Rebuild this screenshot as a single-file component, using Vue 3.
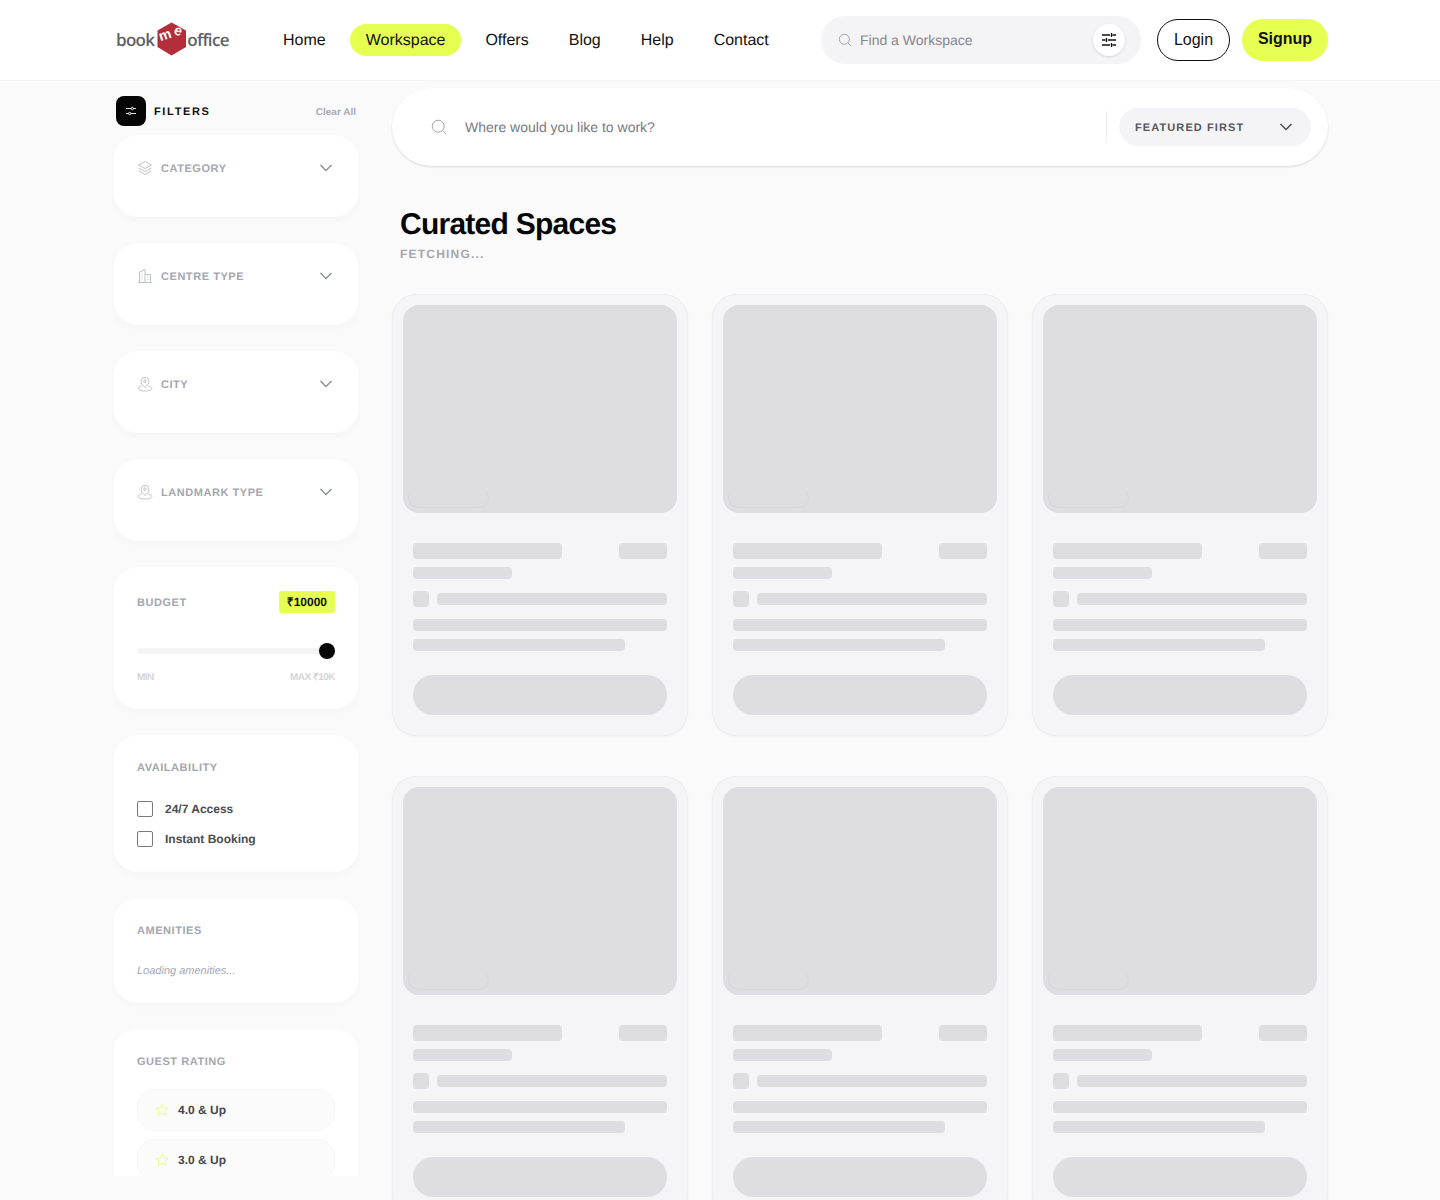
<script setup>
const navLinks = ['Home', 'Workspace', 'Offers', 'Blog', 'Help', 'Contact']
const dropdowns = [
  { label: 'Category', icon: 'layers' },
  { label: 'Centre Type', icon: 'building' },
  { label: 'City', icon: 'pin' },
  { label: 'Landmark Type', icon: 'pin' },
]
const availability = ['24/7 Access', 'Instant Booking']
const ratings = ['4.0 & Up', '3.0 & Up']
const skeletons = [1, 2, 3, 4, 5, 6]
</script>

<template>
  <div class="page">
    <header class="topbar">
      <div class="topbar-inner">
        <a class="logo">
          <span class="logo-word">book</span>
          <svg class="logo-mark" width="30" height="34" viewBox="0 0 30 34">
            <path d="M14.5 0.5 L29 8.5 V25 L14.5 33.5 L0.5 25 V8.5 Z" fill="#b32d3a" />
            <text x="2" y="18" class="logo-m" transform="rotate(-18 7 14)">m</text>
            <text x="17" y="13" class="logo-e" transform="rotate(16 20 10)">e</text>
          </svg>
          <span class="logo-word">office</span>
        </a>
        <nav class="nav">
          <a v-for="link in navLinks" :key="link" class="nav-link" :class="{ active: link === 'Workspace' }">{{ link }}</a>
        </nav>
        <div class="top-search">
          <svg width="14" height="14" viewBox="0 0 14 14" fill="none" stroke="#a3a5ad" stroke-width="1">
            <circle cx="6.3" cy="6.3" r="5" />
            <path d="M10 10 L13 13" />
          </svg>
          <span class="top-search-text">Find a Workspace</span>
          <button class="round-btn">
            <svg width="16" height="16" viewBox="0 0 16 16" fill="none" stroke="#111" stroke-width="1.3">
              <path d="M1 3h8M11.5 3H15M10.5 1v4M1 8h3.5M7 8h8M5.5 6v4M1 13h8M11.5 13H15M10.5 11v4" />
            </svg>
          </button>
        </div>
        <button class="login">Login</button>
        <button class="signup">Signup</button>
      </div>
    </header>

    <div class="layout">
      <aside class="sidebar">
        <div class="filters-head">
          <span class="filters-icon">
            <svg width="12" height="12" viewBox="0 0 12 12" fill="none" stroke="#fff" stroke-width="0.9">
              <path d="M1 3.5h5M8.6 3.5H11M1 8.5h2.4M6 8.5h5" />
              <circle cx="7.3" cy="3.5" r="1.2" />
              <circle cx="4.7" cy="8.5" r="1.2" />
            </svg>
          </span>
          <span class="filters-title">FILTERS</span>
          <span class="clear-all">Clear All</span>
        </div>

        <section v-for="item in dropdowns" :key="item.label" class="filter-card dropdown">
          <div class="dropdown-row">
            <svg v-if="item.icon === 'layers'" class="filter-icon" width="16" height="16" viewBox="0 0 16 16" fill="none" stroke="#b9bbc3" stroke-width="0.9">
              <path d="M8 1.5 L14.5 5 L8 8.5 L1.5 5 Z" />
              <path d="M1.5 8 L8 11.5 L14.5 8" />
              <path d="M1.5 10.8 L8 14.5 L14.5 10.8" />
            </svg>
            <svg v-else-if="item.icon === 'building'" class="filter-icon" width="16" height="16" viewBox="0 0 16 16" fill="none" stroke="#b9bbc3" stroke-width="0.9">
              <path d="M1 14.5h14M2.5 14.5V4L8 1.5v13M8 6.5h5.5v8" />
              <path d="M4.5 6h1M4.5 8.5h1M4.5 11h1M10.5 9h1M10.5 11.5h1" />
            </svg>
            <svg v-else class="filter-icon" width="16" height="16" viewBox="0 0 16 16" fill="none" stroke="#b9bbc3" stroke-width="0.9">
              <path d="M8 11.5 C5.6 9.4 4 7.6 4 5.3 A4 4 0 0 1 12 5.3 C12 7.6 10.4 9.4 8 11.5 Z" />
              <circle cx="8" cy="5.2" r="1.3" />
              <path d="M4.6 10 C2.6 10.5 1.2 11.4 1.2 12.6 C1.2 14 4.2 15 8 15 C11.8 15 14.8 14 14.8 12.6 C14.8 11.4 13.4 10.5 11.4 10" />
            </svg>
            <span class="filter-label">{{ item.label }}</span>
            <svg class="chevron" width="14" height="8" viewBox="0 0 14 8" fill="none" stroke="#8f929c" stroke-width="1.5">
              <path d="M1.5 1 L7 6.5 L12.5 1" />
            </svg>
          </div>
        </section>

        <section class="filter-card budget">
          <div class="budget-top">
            <span class="filter-label">Budget</span>
            <span class="budget-badge">₹10000</span>
          </div>
          <div class="slider">
            <span class="slider-thumb"></span>
          </div>
          <div class="budget-scale">
            <span>MIN</span>
            <span>MAX ₹10K</span>
          </div>
        </section>

        <section class="filter-card availability">
          <div class="filter-label">Availability</div>
          <label v-for="opt in availability" :key="opt" class="check-row">
            <input type="checkbox" class="check" />
            <span>{{ opt }}</span>
          </label>
        </section>

        <section class="filter-card amenities">
          <div class="filter-label">Amenities</div>
          <p class="amenities-loading">Loading amenities...</p>
        </section>

        <section class="filter-card rating">
          <div class="filter-label">Guest Rating</div>
          <div v-for="r in ratings" :key="r" class="rating-row">
            <svg width="14" height="14" viewBox="0 0 14 14" fill="none" stroke="#e9ff80" stroke-width="1">
              <path d="M7 1.2 L8.7 5 L12.9 5.4 L9.8 8.2 L10.7 12.4 L7 10.2 L3.3 12.4 L4.2 8.2 L1.1 5.4 L5.3 5 Z" />
            </svg>
            <span>{{ r }}</span>
          </div>
        </section>
      </aside>

      <main class="main">
        <div class="search-bar">
          <svg width="16" height="16" viewBox="0 0 16 16" fill="none" stroke="#a3a5ad" stroke-width="1">
            <circle cx="7.2" cy="7.2" r="6" />
            <path d="M11.6 11.6 L15 15" />
          </svg>
          <span class="search-bar-text">Where would you like to work?</span>
          <span class="search-divider"></span>
          <div class="sort-select">
            <span class="sort-text">FEATURED FIRST</span>
            <svg width="14" height="8" viewBox="0 0 14 8" fill="none" stroke="#4b4e55" stroke-width="1.5">
              <path d="M1.5 1 L7 6.5 L12.5 1" />
            </svg>
          </div>
        </div>

        <div class="heading">
          <h1>Curated Spaces</h1>
          <p>FETCHING...</p>
        </div>

        <div class="grid">
          <div v-for="n in skeletons" :key="n" class="sk-card">
            <div class="sk-image">
              <span class="sk-chip"></span>
            </div>
            <div class="sk-body">
              <div class="sk-row top-row">
                <span class="bone title"></span>
                <span class="bone price"></span>
              </div>
              <span class="bone sub"></span>
              <div class="sk-row loc-row">
                <span class="bone square"></span>
                <span class="bone grow"></span>
              </div>
              <span class="bone line"></span>
              <span class="bone line short"></span>
              <span class="bone cta"></span>
            </div>
          </div>
        </div>
      </main>
    </div>
  </div>
</template>

<style>
html,
body {
  margin: 0;
  background: #fafafb;
}
</style>

<style scoped>
.page {
  height: 1200px;
  overflow: hidden;
  background: #fafafb;
  font-family: "Liberation Sans", Arial, sans-serif;
  text-rendering: geometricPrecision;
  color: #111;
}

.topbar {
  height: 81px;
  background: #fff;
  border-bottom: 1px solid #f3f3f5;
  box-sizing: border-box;
}

.topbar-inner {
  width: 1216px;
  height: 80px;
  margin: 0 auto;
  display: flex;
  align-items: center;
}

.logo {
  display: flex;
  align-items: center;
  width: 112px;
  margin-left: 4px;
  margin-right: 39px;
  margin-top: -2px;
}

.logo-word {
  font-family: "Open Sans", sans-serif;
  font-size: 17px;
  font-weight: 600;
  letter-spacing: -0.7px;
  color: #5c6266;
}

.logo-mark {
  margin: 0 0 0 3px;
  flex-shrink: 0;
}

.logo-m,
.logo-e {
  fill: #fff;
  font-size: 14px;
  font-weight: 700;
  font-family: "Liberation Sans", sans-serif;
}

.nav {
  display: flex;
  gap: 8px;
}

.nav-link {
  padding: 0 16px;
  height: 32px;
  line-height: 33px;
  border-radius: 16px;
  font-size: 16px;
  color: #111;
}

.nav-link.active {
  background: #e6ff50;
}

.top-search {
  width: 320px;
  height: 48px;
  margin-left: auto;
  padding: 0 16px 0 17px;
  box-sizing: border-box;
  display: flex;
  align-items: center;
  background: #f4f4f6;
  border-radius: 24px;
}

.top-search-text {
  margin-left: 8px;
  flex: 1;
  font-size: 14px;
  color: #84868d;
}

.round-btn {
  width: 32px;
  height: 32px;
  padding: 0;
  border: none;
  border-radius: 50%;
  background: #fff;
  box-shadow: 0 1px 3px rgba(0, 0, 0, 0.12);
  display: flex;
  align-items: center;
  justify-content: center;
}

.login,
.signup {
  height: 42px;
  border-radius: 21px;
  font-family: inherit;
  font-size: 16px;
  color: #111;
}

.login {
  width: 73px;
  margin-left: 16px;
  background: #fff;
  border: 1px solid #111;
}

.signup {
  width: 86px;
  margin-left: 12px;
  padding-bottom: 3px;
  border: none;
  background: #e6ff50;
  font-weight: 700;
}

.layout {
  width: 1216px;
  margin: 0 auto;
  display: flex;
  gap: 32px;
  align-items: flex-start;
}

.sidebar {
  width: 248px;
  height: 1095px;
  flex-shrink: 0;
  overflow: hidden;
  padding: 15px 1px 0;
  box-sizing: border-box;
}

.filters-head {
  display: flex;
  align-items: center;
  height: 30px;
  margin: 0 3px 9px;
}

.filters-icon {
  width: 30px;
  height: 30px;
  border-radius: 8px;
  background: #050505;
  display: flex;
  align-items: center;
  justify-content: center;
}

.filters-title {
  margin-left: 8px;
  padding-top: 1px;
  font-size: 11px;
  font-weight: 700;
  letter-spacing: 1.65px;
  color: #111;
}

.clear-all {
  margin-left: auto;
  padding-top: 2px;
  font-size: 10px;
  font-weight: 700;
  color: #a9abb4;
}

.filter-card {
  background: #fff;
  border: 1px solid #fdfdfd;
  border-radius: 24px;
  box-shadow: 0 3px 8px rgba(30, 30, 60, 0.025);
  margin-bottom: 26px;
  padding: 0 23px;
  box-sizing: border-box;
}

.dropdown {
  height: 82px;
  padding-top: 24px;
}

.dropdown-row {
  display: flex;
  align-items: center;
  height: 16px;
}

.filter-icon {
  margin-right: 8px;
  flex-shrink: 0;
}

.filter-label {
  padding-top: 2px;
  font-size: 11px;
  font-weight: 700;
  letter-spacing: 0.55px;
  line-height: 14px;
  text-transform: uppercase;
  color: #a4a6b0;
}

.chevron {
  margin-left: auto;
  margin-right: 2px;
}

.budget {
  height: 142px;
  padding-top: 23px;
}

.budget-top {
  display: flex;
  align-items: center;
  justify-content: space-between;
}

.budget-badge {
  height: 22px;
  line-height: 22px;
  padding: 0 8px;
  border-radius: 3px;
  background: #e6ff50;
  font-size: 12px;
  font-weight: 700;
  color: #111;
}

.slider {
  position: relative;
  height: 6px;
  margin-top: 35px;
  border-radius: 3px;
  background: #f4f4f6;
}

.slider-thumb {
  position: absolute;
  right: 0;
  top: -5px;
  width: 16px;
  height: 16px;
  border-radius: 50%;
  background: #050505;
}

.budget-scale {
  display: flex;
  justify-content: space-between;
  margin-top: 18px;
  font-size: 10px;
  line-height: 12px;
  font-weight: 700;
  letter-spacing: -0.5px;
  color: #d4d5da;
}

.budget-scale span {
  height: 12px;
}

.availability {
  height: 137px;
  padding-top: 23px;
}

.check-row {
  display: flex;
  align-items: center;
  height: 16px;
  margin-bottom: 14px;
  font-size: 12px;
  font-weight: 700;
  color: #4a4d52;
}

.availability .filter-label {
  margin-bottom: 26px;
}

.check {
  appearance: none;
  width: 16px;
  height: 16px;
  margin: 0 12px 0 0;
  border: 1px solid #77797d;
  border-radius: 2px;
  background: #fff;
}

.amenities {
  height: 105px;
  padding-top: 23px;
}

.amenities-loading {
  margin: 25px 0 0;
  font-size: 11px;
  font-style: italic;
  line-height: 16px;
  color: #a4a6b0;
}

.rating {
  height: 190px;
  padding-top: 23px;
}

.rating .filter-label {
  margin-bottom: 20px;
}

.rating-row {
  height: 42px;
  margin-bottom: 8px;
  padding-left: 17px;
  box-sizing: border-box;
  display: flex;
  align-items: center;
  gap: 9px;
  background: #fbfbfb;
  border: 1px solid #f6f6f7;
  border-radius: 18px;
  font-size: 12px;
  font-weight: 700;
  color: #44474c;
}

.main {
  flex: 1;
  padding-top: 7px;
  min-width: 0;
}

.search-bar {
  height: 78px;
  box-sizing: border-box;
  padding: 0 17px 0 39px;
  display: flex;
  align-items: center;
  background: #fff;
  border-radius: 39px;
  box-shadow: 0 1px 2px rgba(40, 40, 90, 0.16);
}

.search-bar-text {
  flex: 1;
  margin-left: 18px;
  font-size: 14px;
  color: #777a81;
}

.search-divider {
  width: 1px;
  height: 32px;
  margin-right: 12px;
  background: #f2f2f4;
}

.sort-select {
  width: 192px;
  height: 38px;
  box-sizing: border-box;
  padding: 0 18px 0 16px;
  display: flex;
  align-items: center;
  justify-content: space-between;
  background: #f4f4f6;
  border-radius: 19px;
  font-size: 11px;
  font-weight: 700;
  letter-spacing: 1.1px;
  color: #55585e;
}

.sort-text {
  padding-top: 1px;
}

.heading {
  padding: 40px 8px 0;
}

.heading h1 {
  margin: 0;
  padding-top: 1px;
  font-size: 30px;
  line-height: 36px;
  font-weight: 700;
  letter-spacing: -0.75px;
  color: #060606;
}

.heading p {
  margin: 3px 0 0;
  font-size: 12px;
  line-height: 16px;
  font-weight: 700;
  letter-spacing: 1.2px;
  color: #a4a6b0;
}

.grid {
  margin-top: 32px;
  display: grid;
  grid-template-columns: repeat(3, 296px);
  column-gap: 24px;
  row-gap: 40px;
}

.sk-card {
  height: 442px;
  box-sizing: border-box;
  padding: 10px;
  background: #f5f5f8;
  border: 1px solid #eeeef1;
  border-radius: 24px;
  box-shadow: 0 1px 3px rgba(30, 30, 60, 0.04);
}

.sk-image {
  position: relative;
  height: 208px;
  border-radius: 16px;
  background: #dddde2;
}

.sk-chip {
  position: absolute;
  left: 5px;
  bottom: 5px;
  width: 81px;
  height: 20px;
  box-sizing: border-box;
  border: 1px solid #d6d6db;
  border-top-color: transparent;
  border-radius: 10px;
}

.sk-body {
  padding: 30px 10px 0;
  display: flex;
  flex-direction: column;
}

.sk-row {
  display: flex;
  align-items: center;
  justify-content: space-between;
}

.bone {
  display: block;
  background: #dddde2;
  border-radius: 4px;
}

.bone.title {
  width: 149px;
  height: 16px;
}

.bone.price {
  width: 48px;
  height: 16px;
}

.bone.sub {
  width: 99px;
  height: 12px;
  margin-top: 8px;
}

.loc-row {
  margin-top: 12px;
  gap: 8px;
}

.bone.square {
  width: 16px;
  height: 16px;
  flex-shrink: 0;
}

.bone.grow {
  flex: 1;
  height: 12px;
}

.bone.line {
  height: 12px;
  margin-top: 12px;
}

.bone.line.short {
  width: 212px;
  margin-top: 8px;
}

.bone.cta {
  height: 40px;
  margin-top: 24px;
  border-radius: 20px;
}
</style>
